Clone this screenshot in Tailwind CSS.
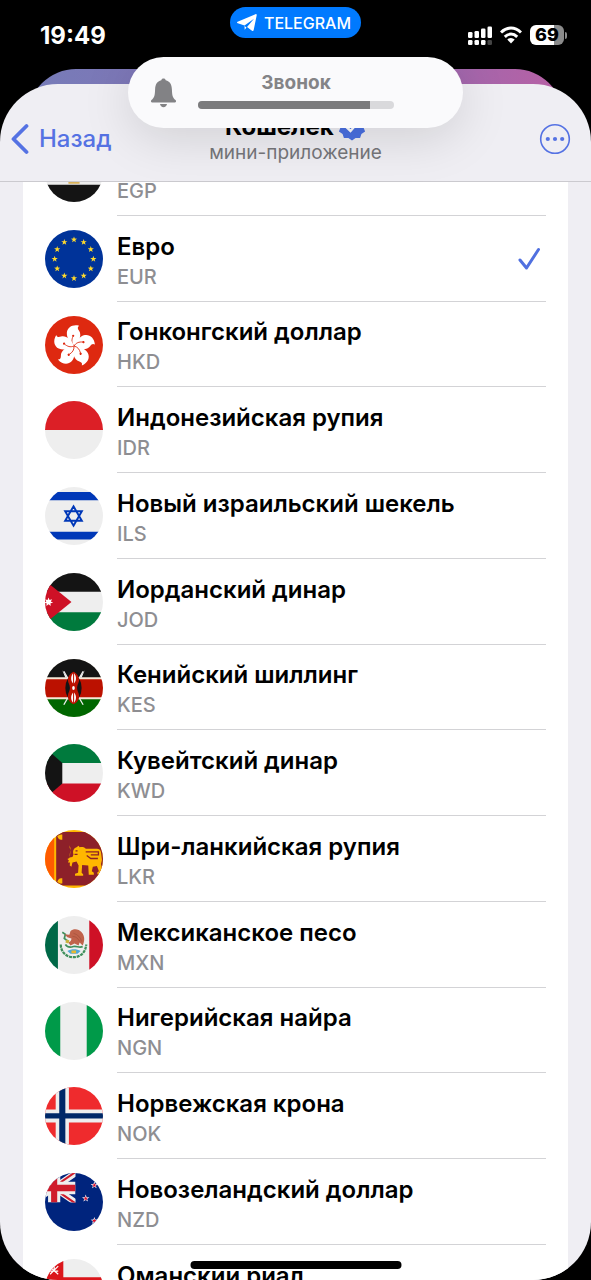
<!DOCTYPE html>
<html lang="ru">
<head>
    <meta charset="UTF-8">
    <meta name="viewport" content="width=device-width, initial-scale=1.0">
    <title>Кошелек</title>
    <script src="https://cdn.jsdelivr.net/npm/@tailwindcss/browser@4"></script>
</head>
<body class="bg-black font-['Inter','Noto_Sans',sans-serif]">
    <!-- Flags and shared shapes -->
    <svg class="hidden" aria-hidden="true">
        <defs>
            <polygon id="star" points="0,-10 2.35,-3.24 9.51,-3.09 3.8,1.24 5.88,8.09 0,4 -5.88,8.09 -3.8,1.24 -9.51,-3.09 -2.35,-3.24"/>
            <g id="petal">
                <path fill="#fff" d="M0 0C-4-4-7.500-8-7-13.500C-6.200-18.500-1.500-21.500 5-20C3-18.500 3.600-17 5-15C7.600-11 6-5 0 0Z"/>
                <path fill="none" stroke="#de2910" stroke-width=".8" d="M0 0C-2.500-3-2.500-6-1-9.500"/>
                <circle cx="-.8" cy="-10" r="1.100" fill="#de2910"/>
            </g>
            <g id="nz-star">
                <use href="#star" transform="scale(.38)" fill="#fff"/>
                <use href="#star" transform="scale(.24)" fill="#d80f2c"/>
            </g>
        </defs>
        <symbol id="flag-EGP" viewBox="0 0 57 57">
            <path fill="#eee" d="M0 0h57v57H0z"/>
            <path fill="#ce1126" d="M0 0h57v18.500H0z"/>
            <path fill="#141414" d="M0 40h57v17H0z"/>
            <path fill="#d9b25a" d="M25 22h7l2 8-2 5h2v4H23v-4h2l-2-5z"/>
        </symbol>
        <symbol id="flag-EUR" viewBox="0 0 57 57">
            <path fill="#039" d="M0 0h57v57H0z"/>
            <g fill="#ffda2c">
                <use href="#star" transform="translate(28.500 9.500) scale(.32)"/>
                <use href="#star" transform="translate(38 12) scale(.32)"/>
                <use href="#star" transform="translate(45 19) scale(.32)"/>
                <use href="#star" transform="translate(47.500 28.500) scale(.32)"/>
                <use href="#star" transform="translate(45 38) scale(.32)"/>
                <use href="#star" transform="translate(38 45) scale(.32)"/>
                <use href="#star" transform="translate(28.500 47.500) scale(.32)"/>
                <use href="#star" transform="translate(19 45) scale(.32)"/>
                <use href="#star" transform="translate(12 38) scale(.32)"/>
                <use href="#star" transform="translate(9.500 28.500) scale(.32)"/>
                <use href="#star" transform="translate(12 19) scale(.32)"/>
                <use href="#star" transform="translate(19 12) scale(.32)"/>
            </g>
        </symbol>
        <symbol id="flag-HKD" viewBox="0 0 57 57">
            <path fill="#de2910" d="M0 0h57v57H0z"/>
            <g transform="translate(28.500 29.500)">
                <use href="#petal"/>
                <use href="#petal" transform="rotate(72)"/>
                <use href="#petal" transform="rotate(144)"/>
                <use href="#petal" transform="rotate(216)"/>
                <use href="#petal" transform="rotate(288)"/>
            </g>
        </symbol>
        <symbol id="flag-IDR" viewBox="0 0 57 57">
            <path fill="#eee" d="M0 0h57v57H0z"/>
            <path fill="#dc1f26" d="M0 0h57v28.500H0z"/>
        </symbol>
        <symbol id="flag-ILS" viewBox="0 0 57 57">
            <path fill="#eee" d="M0 0h57v57H0z"/>
            <path fill="#0038b8" d="M0 5h57v8H0zM0 44h57v7.500H0z"/>
            <path fill="none" stroke="#0038b8" stroke-width="1.900" d="M28 19l8.200 14.200H19.800zM28 38l8.200-14.200H19.800z"/>
        </symbol>
        <symbol id="flag-JOD" viewBox="0 0 57 57">
            <path fill="#eee" d="M0 0h57v57H0z"/>
            <path fill="#141414" d="M0 0h57v18.500H0z"/>
            <path fill="#007a3d" d="M0 38.500h57V57H0z"/>
            <path fill="#ce1126" d="M26 28.500L-9 0v57z"/>
            <path fill="#fff" d="M3.500 24l1 2.600 2.500-.8-1.300 2.200 2.300 1.300-2.600.5.200 2.700-2.100-1.700-2.100 1.700.2-2.700-2.600-.5 2.300-1.300L0 25.800l2.500.8z"/>
        </symbol>
        <symbol id="flag-KES" viewBox="0 0 57 57">
            <path fill="#f5e9d8" d="M0 0h57v57H0z"/>
            <path fill="#141414" d="M0 0h57v18H0z"/>
            <path fill="#b10" d="M0 20h57v17.500H0z"/>
            <path fill="#060" d="M0 39.500h57V57H0z"/>
            <path stroke="#eee" stroke-width="1.300" d="M18.500 12l19 33M37.500 12l-19 33"/>
            <path fill="#eee" d="M17 11l5 7-2 .5zM39 11l-5 7 2 .5z"/>
            <ellipse cx="28" cy="28.500" rx="8" ry="13" fill="#141414"/>
            <path fill="#b10" d="M28 12.500c4 2 5.500 5 5.500 8.500 0 2.500-2 4.500-2 7.500s2 5 2 7.500c0 3.500-1.500 6.500-5.500 8.500-4-2-5.500-5-5.500-8.500 0-2.500 2-4.500 2-7.500s-2-5-2-7.500c0-3.500 1.500-6.500 5.500-8.500z"/>
            <path fill="#fff" d="M27.600 14c-2.500 3-2.500 7 0 10zM28.600 14c2.500 3 2.500 7 0 10zM27.600 33c-2.500 3-2.500 7 0 10zM28.600 33c2.500 3 2.500 7 0 10z"/>
            <ellipse cx="28" cy="28.500" rx="1.300" ry="2" fill="#fff"/>
        </symbol>
        <symbol id="flag-KWD" viewBox="0 0 57 57">
            <path fill="#eee" d="M0 0h57v57H0z"/>
            <path fill="#007a3d" d="M0 0h57v18.700H0z"/>
            <path fill="#ce1126" d="M0 38.700h57V57H0z"/>
            <path fill="#141414" d="M-4 0l21 18.700v20L-4 57z"/>
        </symbol>
        <symbol id="flag-LKR" viewBox="0 0 57 57">
            <path fill="#ffb700" d="M0 0h57v57H0z"/>
            <path fill="#ff5b00" d="M0 2h9v53H0z"/>
            <path fill="#8d2029" d="M11 2h46v52.500H11z"/>
            <path fill="#ffb700" d="M12 6c2-1 3-2 5-1.500v5c-3 .5-4-1-5-3.500zM12 51c2 1 3 2 5 1.500v-5c-3-.5-4 1-5 3.500z"/>
            <path fill="#ffb700" d="M23.500 15c2 5 1.500 9 .5 12l3-.5 1-2.500c-1-3 0-6 3-7l2-1.500 1 1.500c3-.5 5 0 6 1.500h11c2 0 3.500 1 4 3l1 8-1 4 1.500 6-1 4h-4v-2l1.500-1-2-5-4 .5-1 4.500 2 1.500v2h-5l-.5-9-6-.5-.5 7.500 1.500 1.500v1.500h-8v-2l3-1 .5-7-2-4-4 1-1 4-1.700-1 .2-3h-2l1-2-1.500-1.500 2-1 1-10z"/>
            <path fill="none" stroke="#8d2029" stroke-width="1.300" d="M40 21.500h12.500v3H45M41 25l4 3h7M30 20.500h2M29 24h3"/>
        </symbol>
        <symbol id="flag-MXN" viewBox="0 0 57 57">
            <path fill="#eee" d="M0 0h57v57H0z"/>
            <path fill="#006847" d="M0 0h12.700v57H0z"/>
            <path fill="#ce1126" d="M43.500 0H57v57H43.500z"/>
            <path fill="none" stroke="#3f8f5b" stroke-width="2.200" stroke-dasharray="3 .8" d="M15.500 28c0 8 6 12.500 12.500 12.500S40 36 40.500 28"/>
            <path fill="#52a9d6" d="M22 34.500c4-2.500 9-2.500 13 0l-3 2.500h-7z"/>
            <path fill="#e8b92f" d="M26 34h4.500v2.500H26z"/>
            <path fill="none" stroke="#3f8f5b" stroke-width="1.700" d="M20 28c2 3 5 3 8 2s6 2 9 0M17 16l3 2-1 4 4 3"/>
            <path fill="#c0634b" d="M25 15c3-3 8-2.500 11 1 3.500 4 3 9 1 13l-3-3-1 3-4-2-4 2-2-3c2-1 3-2 3-4l-4-1-3-3 5 .5z"/>
            <path fill="none" stroke="#a04e3a" stroke-width=".6" d="M28 17c4 1 7 4 8 8M27 20c4 0 6 3 7 5"/>
            <path fill="#c9b13a" d="M21 23l3 1-1 3-3-1z"/>
        </symbol>
        <symbol id="flag-NGN" viewBox="0 0 57 57">
            <path fill="#eee" d="M0 0h57v57H0z"/>
            <path fill="#009a49" d="M0 0h15v57H0zM41 0h16v57H41z"/>
        </symbol>
        <symbol id="flag-NOK" viewBox="0 0 57 57">
            <path fill="#ef2b2d" d="M0 0h57v57H0z"/>
            <path fill="#eee" d="M10.500 0h13v57h-13zM0 22h57v13H0z"/>
            <path fill="#002868" d="M14 0h6v57h-6zM0 25.700h57v5.300H0z"/>
        </symbol>
        <symbol id="flag-NZD" viewBox="0 0 57 57">
            <path fill="#00247d" d="M0 0h57v57H0z"/>
            <svg width="30" height="29" viewBox="0 0 30 29">
                <path stroke="#eee" stroke-width="6" d="M-20-5.500l58 40M38-5.500l-58 40"/>
                <path stroke="#cf1b2b" stroke-width="2" d="M-20-4.500l58 40M38-6.500l-58 40"/>
                <path fill="#eee" d="M3 0h12v29H3zM0 8.500h30V21H0z"/>
                <path fill="#cf1b2b" d="M6 0h6v29H6zM0 11.500h30v6.500H0z"/>
            </svg>
            <use href="#nz-star" x="40" y="25"/>
            <use href="#nz-star" x="48.500" y="12"/>
            <use href="#nz-star" x="48.500" y="47"/>
        </symbol>
        <symbol id="flag-OMR" viewBox="0 0 57 57">
            <path fill="#eee" d="M0 0h57v57H0z"/>
            <path fill="#008000" d="M0 39h57v18H0z"/>
            <path fill="#db161b" d="M0 0h18v57H0zM0 18h57v21H0z"/>
            <path stroke="#fff" stroke-width="1.200" d="M5 8l8 7M13 7l-8 8M9 6v4M5 12h8"/>
        </symbol>
    </svg>

    <div class="relative flex h-screen flex-col overflow-hidden">
        <!-- Status bar -->
        <div class="grid h-[69px] shrink-0 grid-cols-[1fr_auto_1fr] items-start px-6 text-white">
            <time class="pt-5 pl-4 text-2xl leading-8 font-bold">19:49</time>
            <button type="button" class="mt-[7px] flex h-[31px] items-center gap-[7px] rounded-full bg-[#007aff] pr-[10px] pl-[7px] text-base font-medium">
                <svg class="h-5 w-5" viewBox="0 0 20 20" fill="#fff">
                    <path d="M.6 8.700L18.500 1.200c.8-.3 1.400.1 1.200 1.100l-3 14.600c-.2 1-.9 1.200-1.700.8l-5-3.700 7-8.300-9.500 6.700-6.700-2.200c-1-.4-1-1-.2-1.500z"/>
                    <path d="M7.500 13l2 1.500-1.800 2.200z"/>
                </svg>
                TELEGRAM
            </button>
            <div class="flex items-center justify-end gap-2 pt-[25px]">
                <svg class="h-5 w-6" viewBox="0 0 24 20" fill="#fff" aria-label="Сигнал">
                    <rect x="0" y="7" width="4.500" height="6" rx="1.300"/>
                    <rect x="6.500" y="6" width="4.500" height="7" rx="1.300"/>
                    <rect x="13" y="3.500" width="4.500" height="9.500" rx="1.300"/>
                    <rect x="19.500" y="1.500" width="4.500" height="11.500" rx="1.300"/>
                    <rect x="0" y="15" width="4.500" height="5" rx="1.300"/>
                    <rect x="6.500" y="15" width="4.500" height="5" rx="1.300"/>
                    <rect x="13" y="15" width="4.500" height="5" rx="1.300"/>
                    <rect x="19.500" y="15" width="4.500" height="5" rx="1.300" fill="#444"/>
                </svg>
                <svg class="h-5 w-[22px]" viewBox="0 0 22 20" fill="none" stroke="#fff" stroke-width="3" aria-label="Wi-Fi">
                    <path d="M1 7.500C7 1.500 15 1.500 21 7.500"/>
                    <path d="M4.800 11.800c3.800-3.600 8.600-3.600 12.400 0"/>
                    <path fill="#fff" stroke="none" d="M7.300 14.500c2.300-2 5.100-2 7.400 0L11 18.500z"/>
                </svg>
                <div class="flex items-center gap-px">
                    <div class="flex h-5 w-[34px] items-center justify-center rounded-md bg-linear-to-r from-white from-70% to-[#8b8b8b] to-70% text-lg font-extrabold text-black">69</div>
                    <div class="h-[7px] w-0.5 rounded-r-full bg-[#8b8b8b]"></div>
                </div>
            </div>
        </div>

        <!-- Page that lies under the sheet -->
        <div class="mx-7 -mb-[49px] h-16 shrink-0 rounded-t-[48px] bg-linear-to-r from-[#767cb8] via-[#8a6cb5] via-60% to-[#b860a4]"></div>

        <main class="relative flex min-h-0 flex-1 flex-col overflow-hidden rounded-[58px] bg-[#efeef3]">
            <header class="grid h-[98px] shrink-0 grid-cols-[1fr_auto_1fr] items-end border-b border-[#cbcacf] px-[11px] pb-4">
                <button type="button" class="flex items-center gap-[10px] pb-2 text-2xl leading-9 font-medium text-[#5572e3]">
                    <svg class="h-8 w-[18px]" viewBox="0 0 18 32" fill="none" stroke="currentColor" stroke-width="3.800" stroke-linecap="round" stroke-linejoin="round">
                        <path d="M15.500 3L2.500 16l13 13"/>
                    </svg>
                    Назад
                </button>
                <div class="text-center">
                    <h1 class="flex items-center justify-center gap-1 text-2xl leading-7 font-bold">
                        Кошелек
                        <svg class="h-7 w-7" viewBox="0 0 28 28" aria-hidden="true">
                            <path fill="#4a70e2" d="M14 1l3.600 2.800 4.500-.3 1.300 4.300 3.700 2.600L25.500 14.500l1.600 4-3.700 2.600-1.300 4-4.500-.2L14 27.500l-3.600-2.600-4.500.2-1.300-4L.9 18.500l1.600-4-1.600-4.100 3.700-2.600 1.300-4.300 4.500.3z"/>
                            <path fill="none" stroke="#fff" stroke-width="2.500" stroke-linecap="round" d="M8.500 14l4 4 7-8"/>
                        </svg>
                    </h1>
                    <p class="text-[19px] leading-6 text-[#76767a]">мини-приложение</p>
                </div>
                <button type="button" aria-label="Ещё" class="justify-self-end pr-[9px] pb-2.5 text-[#5572e3]">
                    <svg class="h-8 w-8" viewBox="0 0 32 32" fill="currentColor">
                        <circle cx="16" cy="16" r="14.300" fill="none" stroke="currentColor" stroke-width="1.600"/>
                        <circle cx="8.800" cy="16" r="2.100"/>
                        <circle cx="16" cy="16" r="2.100"/>
                        <circle cx="23.200" cy="16" r="2.100"/>
                    </svg>
                </button>
            </header>

            <div class="min-h-0 flex-1 overflow-hidden px-[23px]">
                <div id="currencyList" role="radiogroup" aria-label="Валюта" class="-mt-[52px] bg-white"></div>
            </div>
        </main>

        <!-- Volume indicator -->
        <div class="absolute inset-x-32 top-[57px] flex h-[71px] items-center gap-[21px] rounded-full bg-[#fafafc] pr-[69px] pl-[22px] shadow-[0_10px_50px_rgba(0,0,0,0.13)]">
            <svg class="h-[30px] w-[27px] shrink-0" viewBox="0 0 27 30" fill="#828285" aria-hidden="true">
                <path d="M13.500.5c1.200 0 2 .7 2.200 1.700 4.200 1 6 4.300 6.200 9 .2 6.500.8 8.500 3.600 10.800 1 .9.700 2.500-.8 2.500H2.300c-1.500 0-1.800-1.600-.8-2.500 2.800-2.300 3.400-4.300 3.600-10.800.2-4.700 2-8 6.200-9 .2-1 1-1.700 2.200-1.700z"/>
                <path d="M10 26h7c-.3 2-1.700 3.200-3.500 3.200S10.300 28 10 26z"/>
            </svg>
            <div class="flex-1 pb-2 text-center">
                <div id="volumeLabel" class="text-[19px] leading-7 font-bold text-[#848487]">Звонок</div>
                <div role="progressbar" aria-labelledby="volumeLabel" aria-valuenow="88" class="mt-1 h-2 overflow-hidden rounded-full bg-[#d9d9dc]">
                    <div class="h-full bg-[#7b7b7d]" style="width: 88%"></div>
                </div>
            </div>
        </div>

        <!-- Home indicator -->
        <div class="absolute bottom-[11px] left-1/2 h-2 w-[211px] -translate-x-1/2 rounded-full bg-black"></div>
    </div>

    <script>
        const currencies = [
            { code: 'EGP', name: 'Египетский фунт' },
            { code: 'EUR', name: 'Евро', selected: true },
            { code: 'HKD', name: 'Гонконгский доллар' },
            { code: 'IDR', name: 'Индонезийская рупия' },
            { code: 'ILS', name: 'Новый израильский шекель' },
            { code: 'JOD', name: 'Иорданский динар' },
            { code: 'KES', name: 'Кенийский шиллинг' },
            { code: 'KWD', name: 'Кувейтский динар' },
            { code: 'LKR', name: 'Шри-ланкийская рупия' },
            { code: 'MXN', name: 'Мексиканское песо' },
            { code: 'NGN', name: 'Нигерийская найра' },
            { code: 'NOK', name: 'Норвежская крона' },
            { code: 'NZD', name: 'Новозеландский доллар' },
            { code: 'OMR', name: 'Оманский риал' }
        ];

        // Render one radio row per currency
        document.getElementById('currencyList').innerHTML = currencies.map(c => `
            <label class="relative flex h-[86px] cursor-pointer items-center gap-[14px] px-[22px] [&:nth-child(4n+3)]:h-[85px]">
                <input type="radio" name="currency" value="${c.code}" class="peer sr-only" ${c.selected ? 'checked' : ''}>
                <svg class="h-[58px] w-[58px] shrink-0 rounded-full"><use href="#flag-${c.code}"/></svg>
                <span class="flex h-full flex-1 flex-col justify-center border-b border-[#d3d3d6] pt-1.5 peer-checked:[&+svg]:block">
                    <span class="text-2xl leading-[30px] font-semibold text-black">${c.name}</span>
                    <span class="text-xl leading-[30px] font-medium text-[#8e8e92]">${c.code}</span>
                </span>
                <svg class="absolute right-[27px] hidden h-6 w-6" viewBox="0 0 24 24" fill="none" stroke="#5070e0" stroke-width="3" stroke-linecap="round" stroke-linejoin="round">
                    <path d="M3 13l6.500 8L21.500 2.500"/>
                </svg>
            </label>
        `).join('');
    </script>
</body>
</html>
